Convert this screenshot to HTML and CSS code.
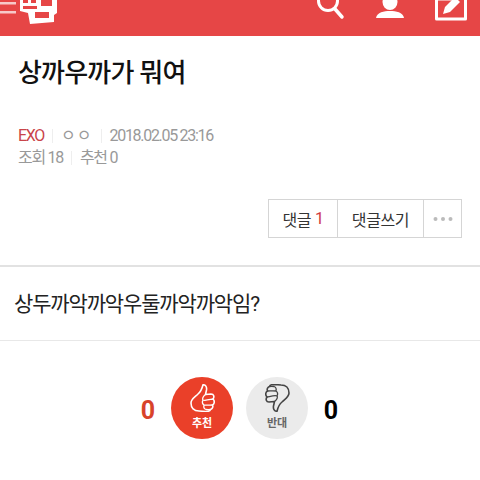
FILE: index.html
```html
<!DOCTYPE html>
<html lang="ko">
<head>
    <meta charset="UTF-8">
    <meta name="viewport" content="width=device-width, initial-scale=1.0">
    <title>상까우까가 뭐여</title>
    <link rel="stylesheet" href="styles.css">
</head>
<body>
    <header class="topbar">
        <div class="brand">
            <svg class="menu-icon" width="16" height="15" viewBox="0 0 16 15">
                <rect x="0" y="2" width="16" height="2.5" fill="#f7c9c9"/>
                <rect x="0" y="11" width="16" height="2.5" fill="#f7c9c9"/>
            </svg>
            <svg class="logo" width="38" height="25" viewBox="0 0 38 25">
                <path d="M0 0H37V13L34 15V22L10 24L8 13L0 11Z" fill="#fff"/>
                <path d="M3 0H8V3H3ZM11 0H16V3H11ZM3 6H17V9H3ZM21 0H32V6H21ZM15 12H29V18H15Z" fill="#e64646"/>
            </svg>
        </div>
        <div class="top-icons">
            <svg width="28" height="22" viewBox="0 0 28 22">
                <circle cx="11" cy="1" r="9.5" fill="none" stroke="#fff" stroke-width="3"/>
                <path d="M18 9L25 17" stroke="#fff" stroke-width="3.5" stroke-linecap="round"/>
            </svg>
            <svg width="28" height="22" viewBox="0 0 28 22">
                <ellipse cx="14" cy="2" rx="7.5" ry="8" fill="#fff"/>
                <path d="M0 18C1 12 8 11 14 11C20 11 27 12 28 18Z" fill="#fff"/>
            </svg>
            <svg width="32" height="22" viewBox="0 0 32 22">
                <path d="M17 -1H1.5V19H30.5V-1" fill="none" stroke="#fff" stroke-width="3" stroke-linejoin="round"/>
                <path d="M8 14L10 7L20 -3L25 2L15 12Z" fill="#fff"/>
            </svg>
        </div>
    </header>

    <h1 class="title">상까우까가 뭐여</h1>

    <div class="meta">
        <div class="meta-row">
            <span class="writer">EXO</span>
            <span class="sep"></span>
            <span class="nick">ㅇㅇ</span>
            <span class="sep"></span>
            <span>2018.02.05 23:16</span>
        </div>
        <div class="meta-row">
            <span>조회 18</span>
            <span class="sep"></span>
            <span>추천 0</span>
        </div>
    </div>

    <div class="actions">
        <div class="btn-group">
            <span class="btn btn-count">댓글 <em>1</em></span>
            <span class="btn btn-write">댓글쓰기</span>
            <span class="btn btn-more">
                <svg width="20" height="4" viewBox="0 0 20 4">
                    <circle cx="2.5" cy="2" r="2" fill="#bbb"/>
                    <circle cx="10" cy="2" r="2" fill="#bbb"/>
                    <circle cx="17.5" cy="2" r="2" fill="#bbb"/>
                </svg>
            </span>
        </div>
    </div>

    <div class="content">상두까악까악우둘까악까악임?</div>

    <div class="votes">
        <span class="count count-up">0</span>
        <div class="vote vote-up">
            <svg width="25" height="28" viewBox="0 0 25 28">
                <path d="M13 .8C15.5 .5 17 3 16.5 6L15.5 10.5L21 10C24 10 24.5 13 23 15C25 17 24.5 20 22.5 21C23.5 23 22 25 20.5 25.5C20 27 18 27.5 16 27.5L9 27C4 27 1 24 1 19C1 15 5 13 8 10C10.5 8 12 5 13 .8Z" fill="none" stroke="#fff" stroke-width="1.6" stroke-linejoin="round"/>
                <path d="M15.5 10.5C13 12 12 15 13 16C15 17 20 15.5 23 15M13 16C12 18 12.5 20 14 21C17 21.5 20 21 22.5 21M14 21C13.5 23 14.5 25 16 25.5C18 25.8 19 25.7 20.5 25.5" fill="none" stroke="#fff" stroke-width="1.3"/>
            </svg>
            <span>추천</span>
        </div>
        <div class="vote vote-down">
            <svg width="25" height="28" viewBox="0 0 25 28">
                <g transform="rotate(180 12.5 14)">
                    <path d="M13 .8C15.5 .5 17 3 16.5 6L15.5 10.5L21 10C24 10 24.5 13 23 15C25 17 24.5 20 22.5 21C23.5 23 22 25 20.5 25.5C20 27 18 27.5 16 27.5L9 27C4 27 1 24 1 19C1 15 5 13 8 10C10.5 8 12 5 13 .8Z" fill="none" stroke="#444" stroke-width="1.6" stroke-linejoin="round"/>
                    <path d="M15.5 10.5C13 12 12 15 13 16C15 17 20 15.5 23 15M13 16C12 18 12.5 20 14 21C17 21.5 20 21 22.5 21M14 21C13.5 23 14.5 25 16 25.5C18 25.8 19 25.7 20.5 25.5" fill="none" stroke="#444" stroke-width="1.3"/>
                </g>
            </svg>
            <span>반대</span>
        </div>
        <span class="count count-down">0</span>
    </div>
</body>
</html>
```

FILE: styles.css
```css
body {
    margin: 0;
    background-color: #fff;
    font-family: Roboto, "Noto Sans CJK KR", sans-serif;
    color: #222;
    overflow: hidden;
}

.topbar {
    height: 36px;
    background-color: #e64646;
    display: flex;
    justify-content: space-between;
    overflow: hidden;
}

.brand {
    display: flex;
    align-items: flex-start;
}

.logo {
    margin-left: 4px;
}

.top-icons {
    display: flex;
    gap: 31px;
    padding-right: 13px;
}

.title {
    margin: 0;
    padding: 17px 18px 0;
    font-size: 26px;
    line-height: 40px;
    font-weight: 500;
    letter-spacing: -0.8px;
    color: #111;
}

.meta {
    padding: 32px 18px 0;
    font-size: 16px;
    line-height: 22px;
    letter-spacing: -1.3px;
    color: #999;
}

.meta-row {
    display: flex;
    align-items: center;
    gap: 8px;
}

.writer {
    color: #c9444a;
}

.nick {
    letter-spacing: 1px;
}

.sep {
    width: 1px;
    height: 14px;
    background-color: #eee;
}

.actions {
    display: flex;
    justify-content: flex-end;
    padding: 30px 18px 0 0;
}

.btn-group {
    display: flex;
    height: 37px;
    border: 1px solid #d5d5d5;
}

.btn {
    display: flex;
    align-items: center;
    justify-content: center;
    font-size: 16px;
    letter-spacing: -0.4px;
    color: #333;
    border-left: 1px solid #d5d5d5;
}

.btn:first-child {
    border-left: none;
}

.btn em {
    font-style: normal;
    color: #d0393e;
    margin-left: 4px;
}

.btn-count {
    width: 68px;
}

.btn-write {
    width: 85px;
}

.btn-more {
    width: 37px;
}

.content {
    margin-top: 27px;
    padding: 22px 14px 0;
    height: 51px;
    border-top: 2px solid #e2e2e2;
    border-bottom: 1px solid #e8e8e8;
    font-size: 21px;
    line-height: 30px;
    letter-spacing: -1.15px;
    color: #222;
}

.votes {
    display: flex;
    justify-content: center;
    align-items: center;
    gap: 13px;
    padding: 36px 1px 0 0;
}

.count {
    font-size: 25px;
    font-weight: 700;
    width: 20px;
    padding-top: 4px;
    text-align: center;
}

.count-up {
    color: #d8432a;
}

.count-down {
    color: #000;
}

.vote {
    width: 62px;
    height: 62px;
    border-radius: 50%;
    display: flex;
    flex-direction: column;
    align-items: center;
    font-size: 11px;
    line-height: 14px;
    font-weight: 700;
}

.vote svg {
    margin-top: 7px;
    margin-bottom: 5px;
}

.vote-up {
    background-color: #ea4029;
    color: #fff;
}

.vote-down {
    background-color: #ebebeb;
    color: #666;
}
```
